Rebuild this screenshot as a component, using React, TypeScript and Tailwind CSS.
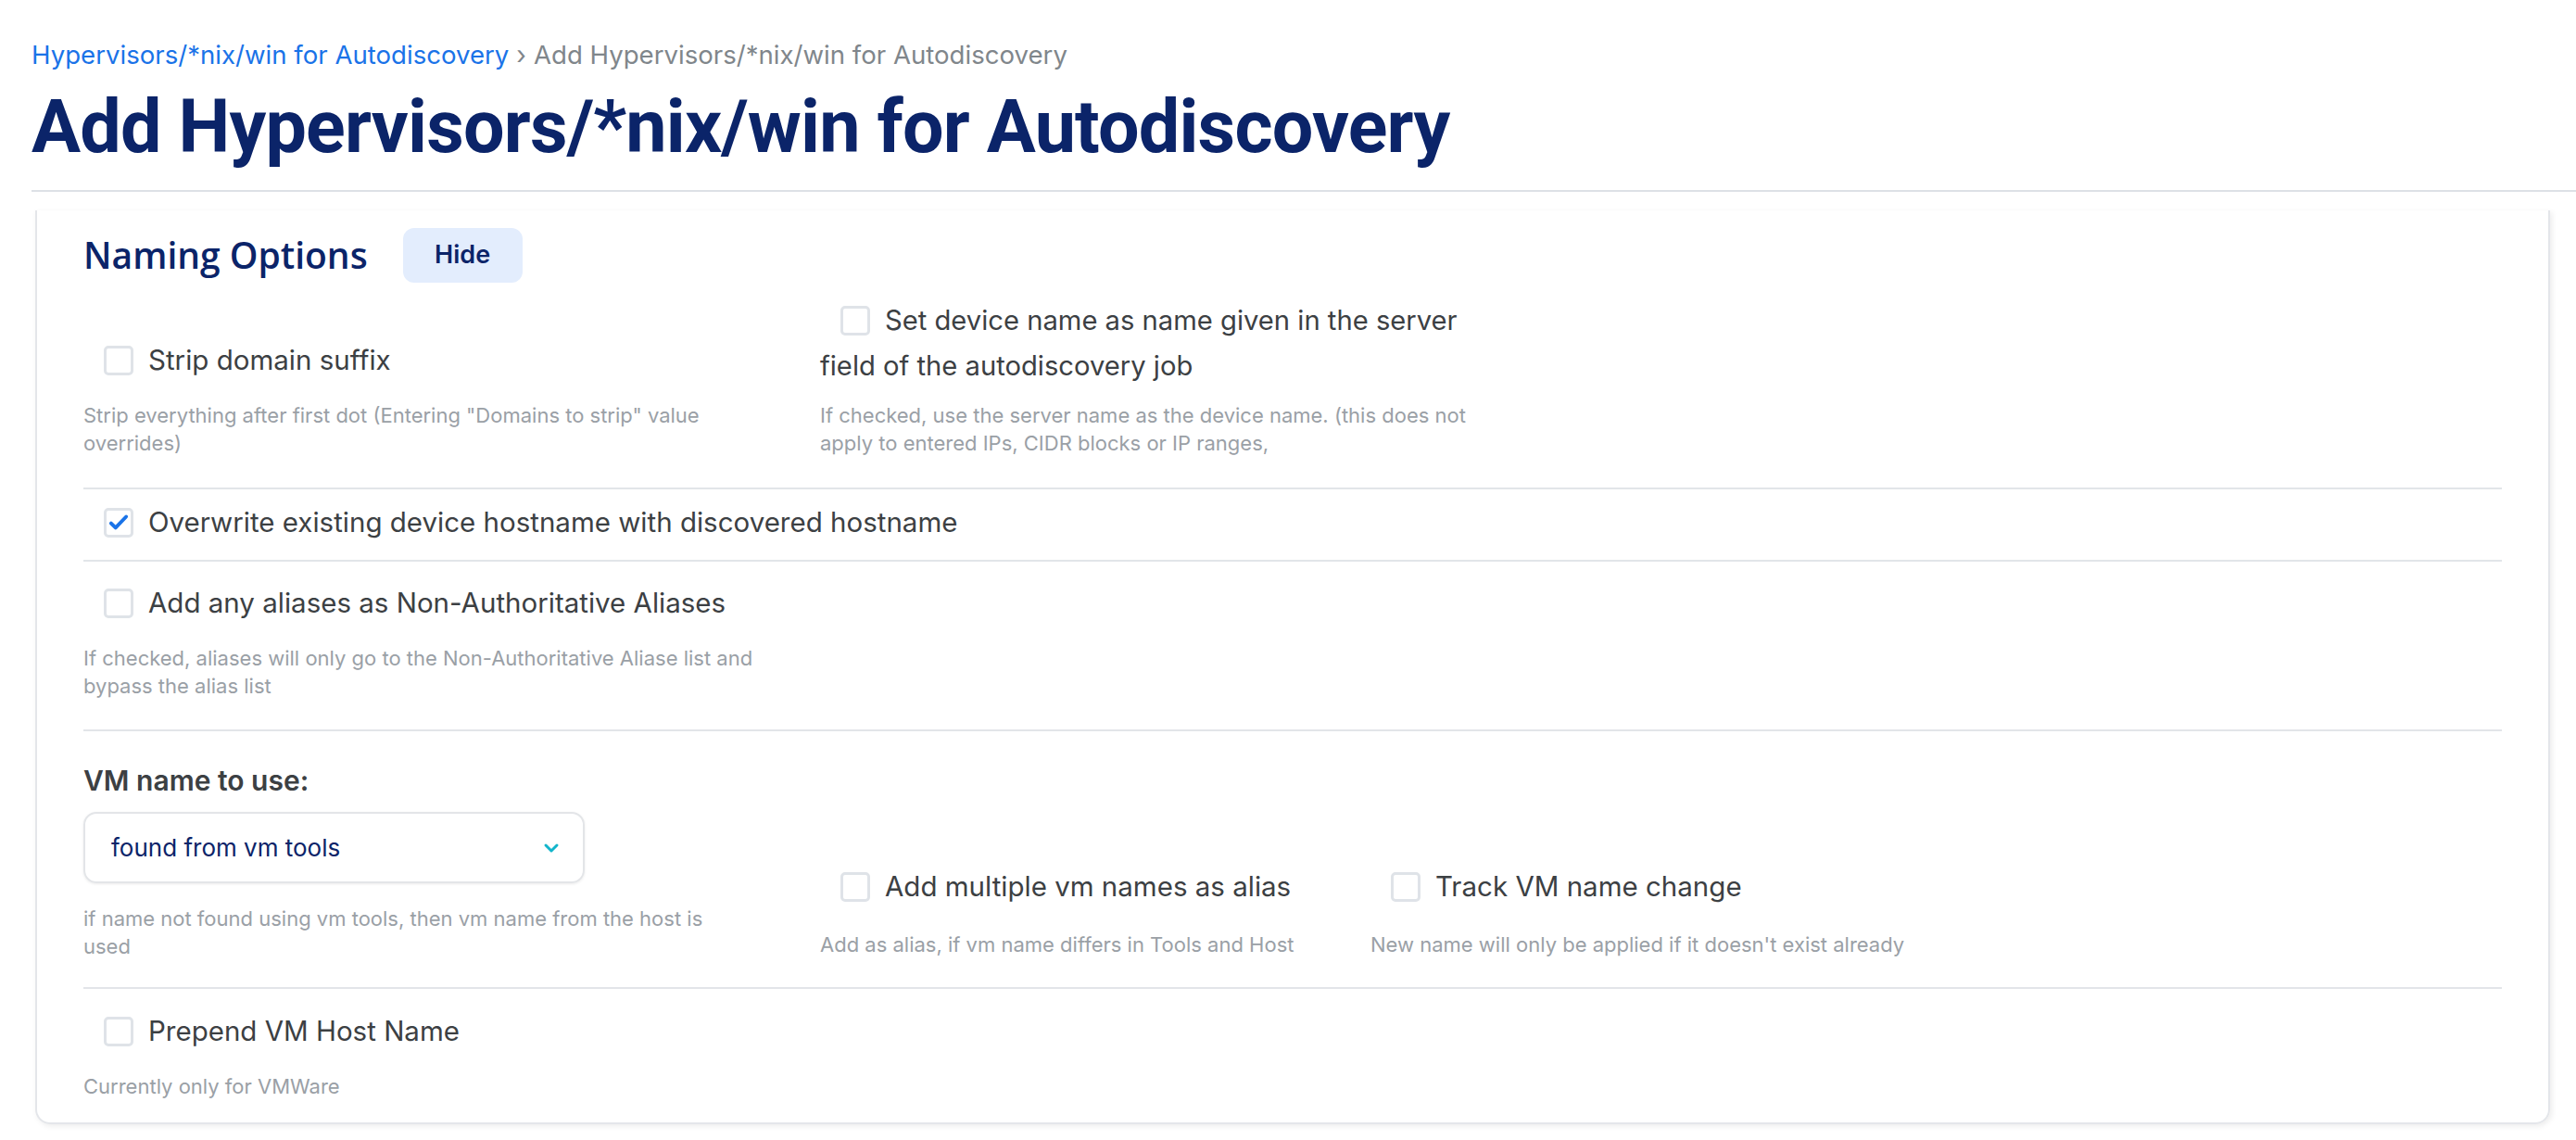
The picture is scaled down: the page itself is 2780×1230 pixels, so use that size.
import React from "react";

const Box = ({ checked = false, className = "" }: { checked?: boolean; className?: string }) => (
  <span
    className={`inline-flex h-[32px] w-[32px] shrink-0 items-center justify-center rounded-[5px] border-[3px] border-[#dfe3e8] bg-white ${className}`}
  >
    {checked && (
      <svg viewBox="0 0 24 24" className="h-[26px] w-[26px]" fill="none">
        <path d="M4.5 12.5l4.5 4.5L19.5 6" stroke="#1a73e8" strokeWidth="3.6" strokeLinecap="round" strokeLinejoin="round" />
      </svg>
    )}
  </span>
);

const Check = ({ label, checked = false }: { label: string; checked?: boolean }) => (
  <label className="flex h-[49px] items-center gap-[16px] pl-[22px] text-[29.5px] text-[#3c4043]">
    <Box checked={checked} />
    <span>{label}</span>
  </label>
);

const Help = ({ children, wide = false }: { children: React.ReactNode; wide?: boolean }) => (
  <p className={`mt-[20px] text-[22px] leading-[30px] text-[#9aa0a6] ${wide ? "max-w-[760px]" : "max-w-[720px]"}`}>
    {children}
  </p>
);

export default function App() {
  return (
    <div className="min-h-screen bg-white font-['Inter','Noto_Sans',sans-serif] antialiased">
      <div className="pl-[34px] pt-[41px]">
        <nav className="flex items-center gap-[8px] text-[27.6px] leading-[36px]">
          <a className="text-[#1a73e8]">Hypervisors/*nix/win for Autodiscovery</a>
          <span className="text-[#80868b]">›</span>
          <span className="text-[#80868b]">Add Hypervisors/*nix/win for Autodiscovery</span>
        </nav>
        <h1 className="mt-[10px] font-['Roboto',sans-serif] text-[79px] font-bold leading-[100px] tracking-[-0.01em] text-[#0b2469]">
          Add Hypervisors/*nix/win for Autodiscovery
        </h1>
        <hr className="mt-[18px] border-t-2 border-[#dde1e6]" />
      </div>

      <div className="ml-[38px] mr-[28px] mt-[20px] rounded-b-[16px] border-x-2 border-b-2 border-[#e4e6ea] px-[50px] pb-[24px] pt-[19px] shadow-[2px_2px_6px_rgba(0,0,0,0.08)]">
        {/* header */}
        <div className="flex items-center gap-[30px]">
          <h2 className="font-['Open_Sans',sans-serif] text-[39px] font-semibold text-[#0b2469]">Naming Options</h2>
          <button className="ml-[8px] h-[59px] w-[129px] rounded-[12px] bg-[#e3edfd] text-[27px] font-semibold text-[#0b2469]">
            Hide
          </button>
        </div>

        {/* row 1 */}
        <div className="mt-[16px] flex items-end pb-[33px]">
          <div className="w-[795px]">
            <Check label="Strip domain suffix" />
            <Help>Strip everything after first dot (Entering "Domains to strip" value overrides)</Help>
          </div>
          <div className="w-[720px]">
            <label className="block text-[29.2px] leading-[49px] text-[#3c4043]">
              <Box className="ml-[22px] mr-[16px] align-[-6px]" />
              Set device name as name given in the server field of the autodiscovery job
            </label>
            <p className="mt-[14px] text-[22px] leading-[30px] text-[#9aa0a6]">
              If checked, use the server name as the device name. (this does not apply to entered IPs, CIDR blocks or IP
              ranges,
            </p>
          </div>
        </div>

        {/* row 2 */}
        <div className="border-t-2 border-[#e2e5e9] pb-[16px] pt-[11px]">
          <Check label="Overwrite existing device hostname with discovered hostname" checked />
        </div>

        {/* row 3 */}
        <div className="border-t-2 border-[#e2e5e9] pb-[32px] pt-[20px]">
          <Check label="Add any aliases as Non-Authoritative Aliases" />
          <Help wide>If checked, aliases will only go to the Non-Authoritative Aliase list and bypass the alias list</Help>
        </div>

        {/* vm row */}
        <div className="flex items-end border-t-2 border-[#e2e5e9] pb-[29px] pt-[33px]">
          <div className="w-[795px]">
            <div className="text-[30px] font-semibold leading-[40px] text-[#3c4043]">VM name to use:</div>
            <div className="mt-[14px] flex h-[77px] w-[541px] items-center justify-between rounded-[14px] border-2 border-[#e3e5e8] pl-[28px] pr-[22px] shadow-[0_1px_3px_rgba(0,0,0,0.08)]">
              <span className="text-[26px] text-[#0b2469]">found from vm tools</span>
              <svg viewBox="0 0 24 24" className="h-[24px] w-[24px]" fill="none">
                <path d="M6 9l6 6 6-6" stroke="#12b5cb" strokeWidth="3" strokeLinecap="round" strokeLinejoin="round" />
              </svg>
            </div>
            <p className="mt-[23px] max-w-[700px] text-[22px] leading-[30px] text-[#9aa0a6]">
              if name not found using vm tools, then vm name from the host is used
            </p>
          </div>
          <div className="w-[594px] pb-[2px]">
            <Check label="Add multiple vm names as alias" />
            <p className="mt-[23px] text-[22px] leading-[30px] text-[#9aa0a6]">
              Add as alias, if vm name differs in Tools and Host
            </p>
          </div>
          <div className="pb-[2px]">
            <Check label="Track VM name change" />
            <p className="mt-[23px] text-[22px] leading-[30px] text-[#9aa0a6]">
              New name will only be applied if it doesn't exist already
            </p>
          </div>
        </div>

        {/* last row */}
        <div className="border-t-2 border-[#e2e5e9] pt-[21px]">
          <Check label="Prepend VM Host Name" />
          <Help>Currently only for VMWare</Help>
        </div>
      </div>
    </div>
  );
}
